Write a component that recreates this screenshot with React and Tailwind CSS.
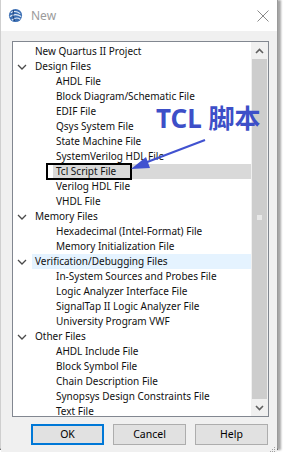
const rows = [
  { t: 'New Quartus II Project', lvl: 0 },
  { t: 'Design Files', lvl: 0, group: true },
  { t: 'AHDL File', lvl: 1 },
  { t: 'Block Diagram/Schematic File', lvl: 1 },
  { t: 'EDIF File', lvl: 1 },
  { t: 'Qsys System File', lvl: 1 },
  { t: 'State Machine File', lvl: 1 },
  { t: 'SystemVerilog HDL File', lvl: 1 },
  { t: 'Tcl Script File', lvl: 1, sel: true },
  { t: 'Verilog HDL File', lvl: 1 },
  { t: 'VHDL File', lvl: 1 },
  { t: 'Memory Files', lvl: 0, group: true },
  { t: 'Hexadecimal (Intel-Format) File', lvl: 1 },
  { t: 'Memory Initialization File', lvl: 1 },
  { t: 'Verification/Debugging Files', lvl: 0, group: true, hover: true },
  { t: 'In-System Sources and Probes File', lvl: 1 },
  { t: 'Logic Analyzer Interface File', lvl: 1 },
  { t: 'SignalTap II Logic Analyzer File', lvl: 1 },
  { t: 'University Program VWF', lvl: 1 },
  { t: 'Other Files', lvl: 0, group: true },
  { t: 'AHDL Include File', lvl: 1 },
  { t: 'Block Symbol File', lvl: 1 },
  { t: 'Chain Description File', lvl: 1 },
  { t: 'Synopsys Design Constraints File', lvl: 1 },
  { t: 'Text File', lvl: 1 },
];

function Chevron() {
  return (
    <svg width="10" height="6" viewBox="0 0 10 6" className="ml-[4px]">
      <polyline points="1,1 5,5 9,1" fill="none" stroke="#4a4a4a" strokeWidth="1.3" />
    </svg>
  );
}

function TreeRow({ row }) {
  const bg = row.sel ? 'bg-[#d9d9d9]' : row.hover ? 'bg-[#e5f3ff]' : '';
  return (
    <div className="flex h-[15px] items-center">
      <div className={`flex shrink-0 items-center ${row.lvl === 0 ? 'w-[19px]' : 'w-[40px]'}`}>
        {row.group && <Chevron />}
      </div>
      <div className={`flex h-full flex-1 items-center whitespace-nowrap pl-[3px] ${bg}`}>{row.t}</div>
    </div>
  );
}

function QuartusIcon() {
  return (
    <svg width="15" height="15" viewBox="0 0 16 16">
      <circle cx="8" cy="8" r="7" fill="#3c6fb4" />
      <path d="M3 5 Q8 2 13 6" stroke="#e6eef8" strokeWidth="1.2" fill="none" />
      <path d="M2 9 Q8 5 14 9" stroke="#e6eef8" strokeWidth="1.2" fill="none" />
      <path d="M4 13 Q9 9 13 12" stroke="#e6eef8" strokeWidth="1.2" fill="none" />
      <path d="M6 2 Q4 8 7 14" stroke="#1d3f74" strokeWidth="1" fill="none" />
    </svg>
  );
}

function Btn({ children, primary }) {
  return (
    <div
      className={`flex h-[21px] w-[73px] items-center justify-center bg-[#e1e1e1] text-[10.5px] text-black ${
        primary ? 'border-2 border-[#0078d7]' : 'border border-[#adadad]'
      }`}
    >
      {children}
    </div>
  );
}

export default function App() {
  return (
    <div className="relative h-[462px] w-[284px] overflow-hidden bg-white font-['Noto_Sans',sans-serif] text-[10px] text-[#111]">
      <div className="flex h-[450px] w-[278px] flex-col border-b-2 border-l border-r border-b-[#555] border-l-[#cfcfcf] border-r-[#9a9a9a] shadow-[3px_0_2px_rgba(0,0,0,0.35)]">
        <div className="flex h-[31px] shrink-0 items-center bg-white pl-[7px]">
          <QuartusIcon />
          <span className="ml-[8px] text-[12px] text-[#9b9b9b]">New</span>
          <svg width="12" height="12" viewBox="0 0 12 12" className="ml-auto mr-[8px]">
            <path d="M0.5 0.5 L11.5 11.5 M11.5 0.5 L0.5 11.5" stroke="#8a8a8a" strokeWidth="1" />
          </svg>
        </div>
        <div className="flex flex-1 flex-col bg-[#f0f0f0] pl-[11px] pt-[10px]">
          <div className="flex h-[376px] w-[257px] border border-[#828790] bg-white">
            <div className="flex-1 overflow-hidden pt-[2px] leading-[15px]">
              {rows.map((r) => (
                <TreeRow key={r.t} row={r} />
              ))}
            </div>
            <div className="flex w-[17px] shrink-0 flex-col bg-[#f0f0f0]">
              <div className="flex h-[17px] items-center justify-center">
                <svg width="9" height="6" viewBox="0 0 9 6">
                  <polyline points="1,5 4.5,1.5 8,5" fill="none" stroke="#606060" strokeWidth="1.6" />
                </svg>
              </div>
              <div className="relative mx-[1px] flex-1 bg-[#cdcdcd]">
                <div className="absolute left-[5px] top-[156px] h-[5px] w-[5px] bg-[#e8e8e8]" />
              </div>
              <div className="flex h-[17px] items-center justify-center">
                <svg width="9" height="6" viewBox="0 0 9 6">
                  <polyline points="1,1 4.5,4.5 8,1" fill="none" stroke="#606060" strokeWidth="1.6" />
                </svg>
              </div>
            </div>
          </div>
          <div className="mt-[7px] flex w-[256px] justify-end gap-[9px]">
            <Btn primary>OK</Btn>
            <Btn>Cancel</Btn>
            <Btn>Help</Btn>
          </div>
          <div className="ml-auto mr-[2px] mt-[2px] grid grid-cols-3 gap-[1px] self-end">
            {[0, 0, 1, 0, 1, 1, 1, 1, 1].map((v, i) => (
              <div key={i} className={`h-[1px] w-[1px] ${v ? 'bg-[#a0a0a0]' : ''}`} />
            ))}
          </div>
        </div>
      </div>

      {/* annotation */}
      <div className="absolute left-[46px] top-[163px] h-[17px] w-[86px] border-2 border-black" />
      <div className="absolute left-[156px] top-[105px] whitespace-nowrap font-['Noto_Sans','Noto_Sans_CJK_SC',sans-serif] text-[26px] font-bold leading-[26px] text-[#3d4fc8]">
        TCL 脚本
      </div>
      <svg className="absolute left-0 top-0" width="284" height="462" viewBox="0 0 284 462">
        <line x1="205" y1="140" x2="142" y2="164" stroke="#4152d0" strokeWidth="2" />
        <polygon points="131,169 146,157 150,168" fill="#4152d0" />
      </svg>
    </div>
  );
}
